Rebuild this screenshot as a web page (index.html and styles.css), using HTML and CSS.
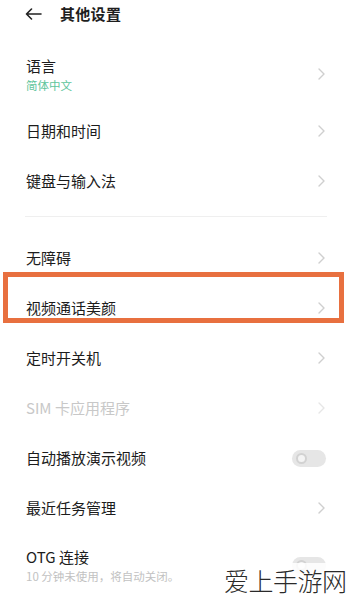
FILE: index.html
```html
<!DOCTYPE html>
<html lang="zh-CN">
<head>
<meta charset="utf-8">
<title>其他设置</title>
<link rel="stylesheet" href="styles.css">
</head>
<body>
<div class="screen">
  <header class="topbar">
    <svg class="back" width="17" height="12" viewBox="0 0 17 12"><path d="M16 6H1.5M6.5 1L1.5 6l5 5" fill="none" stroke="#222" stroke-width="1.6" stroke-linecap="round" stroke-linejoin="round"/></svg>
    <span class="title">其他设置</span>
  </header>

  <section class="group first">
    <div class="row tall">
      <div class="texts">
        <span class="label">语言</span>
        <span class="sub green">简体中文</span>
      </div>
      <svg class="chev" width="7" height="12" viewBox="0 0 7 12"><path d="M1 1l5 5-5 5" fill="none" stroke="#cfcfcf" stroke-width="1.4" stroke-linecap="round" stroke-linejoin="round"/></svg>
    </div>
    <div class="row">
      <span class="label">日期和时间</span>
      <svg class="chev" width="7" height="12" viewBox="0 0 7 12"><path d="M1 1l5 5-5 5" fill="none" stroke="#cfcfcf" stroke-width="1.4" stroke-linecap="round" stroke-linejoin="round"/></svg>
    </div>
    <div class="row">
      <span class="label">键盘与输入法</span>
      <svg class="chev" width="7" height="12" viewBox="0 0 7 12"><path d="M1 1l5 5-5 5" fill="none" stroke="#cfcfcf" stroke-width="1.4" stroke-linecap="round" stroke-linejoin="round"/></svg>
    </div>
  </section>

  <div class="divider"></div>

  <section class="group">
    <div class="row">
      <span class="label">无障碍</span>
      <svg class="chev" width="7" height="12" viewBox="0 0 7 12"><path d="M1 1l5 5-5 5" fill="none" stroke="#cfcfcf" stroke-width="1.4" stroke-linecap="round" stroke-linejoin="round"/></svg>
    </div>
    <div class="row marked">
      <span class="label">视频通话美颜</span>
      <svg class="chev" width="7" height="12" viewBox="0 0 7 12"><path d="M1 1l5 5-5 5" fill="none" stroke="#cfcfcf" stroke-width="1.4" stroke-linecap="round" stroke-linejoin="round"/></svg>
      <div class="highlight"></div>
    </div>
    <div class="row">
      <span class="label">定时开关机</span>
      <svg class="chev" width="7" height="12" viewBox="0 0 7 12"><path d="M1 1l5 5-5 5" fill="none" stroke="#cfcfcf" stroke-width="1.4" stroke-linecap="round" stroke-linejoin="round"/></svg>
    </div>
    <div class="row">
      <span class="label disabled">SIM 卡应用程序</span>
      <svg class="chev" width="7" height="12" viewBox="0 0 7 12"><path d="M1 1l5 5-5 5" fill="none" stroke="#e6e6e6" stroke-width="1.4" stroke-linecap="round" stroke-linejoin="round"/></svg>
    </div>
    <div class="row">
      <span class="label">自动播放演示视频</span>
      <span class="toggle"><span class="knob"></span></span>
    </div>
    <div class="row">
      <span class="label">最近任务管理</span>
      <svg class="chev" width="7" height="12" viewBox="0 0 7 12"><path d="M1 1l5 5-5 5" fill="none" stroke="#cfcfcf" stroke-width="1.4" stroke-linecap="round" stroke-linejoin="round"/></svg>
    </div>
    <div class="row tall">
      <div class="texts">
        <span class="label">OTG 连接</span>
        <span class="sub grey">10 分钟未使用，将自动关闭。</span>
      </div>
      <span class="toggle"><span class="knob"></span></span>
    </div>
  </section>

  <div class="watermark">爱上手游网</div>
</div>
</body>
</html>
```

FILE: styles.css
```css
* { box-sizing: border-box; }
html, body {
  margin: 0;
  padding: 0;
  background: #ffffff;
}
body {
  font-family: "Noto Sans CJK SC", "Noto Sans", "Liberation Sans", sans-serif;
  color: #222222;
}
.screen {
  position: relative;
  width: 351px;
  height: 600px;
  overflow: hidden;
  background: #ffffff;
}
.topbar {
  height: 27px;
  display: flex;
  align-items: center;
  padding-left: 25px;
  gap: 18px;
}
.back { display: block; }
.title {
  font-size: 15px;
  font-weight: 700;
  color: #1e1e1e;
  letter-spacing: 0.3px;
}
.group {
  display: flex;
  flex-direction: column;
}
.group.first { margin-top: 15px; }
.row {
  position: relative;
  height: 50px;
  display: flex;
  align-items: center;
  justify-content: space-between;
  padding: 0 25px 0 26px;
}
.row.tall { height: 64px; }
.texts {
  display: flex;
  flex-direction: column;
  gap: 2px;
}
.label {
  font-size: 15px;
  line-height: 20px;
  color: #1c1c1c;
}
.label.disabled { color: #c8c8c8; }
.sub {
  font-size: 11.5px;
  line-height: 14px;
}
.sub.green { color: #5ec59c; }
.sub.grey { color: #c2c2c2; }
.chev { display: block; margin-right: 1px; }
.divider {
  height: 1px;
  background: #efefef;
  margin: 10px 24px 16px 25px;
}
.toggle {
  position: relative;
  width: 34px;
  height: 17px;
  border-radius: 9px;
  background: #e6e6e6;
}
.knob {
  position: absolute;
  left: 4px;
  top: 3px;
  width: 11px;
  height: 11px;
  border-radius: 50%;
  border: 2px solid #d2d2d2;
  background: #f4f4f4;
}
.highlight {
  position: absolute;
  left: 3px;
  right: 7px;
  top: -11px;
  height: 51px;
  border: 5px solid #e8703f;
  pointer-events: none;
}
.watermark {
  position: absolute;
  left: 224px;
  top: 563px;
  font-size: 25px;
  line-height: 34px;
  font-weight: 300;
  color: #2a2a2a;
  letter-spacing: -0.5px;
  background: rgba(255,255,255,0.85);
}
```
